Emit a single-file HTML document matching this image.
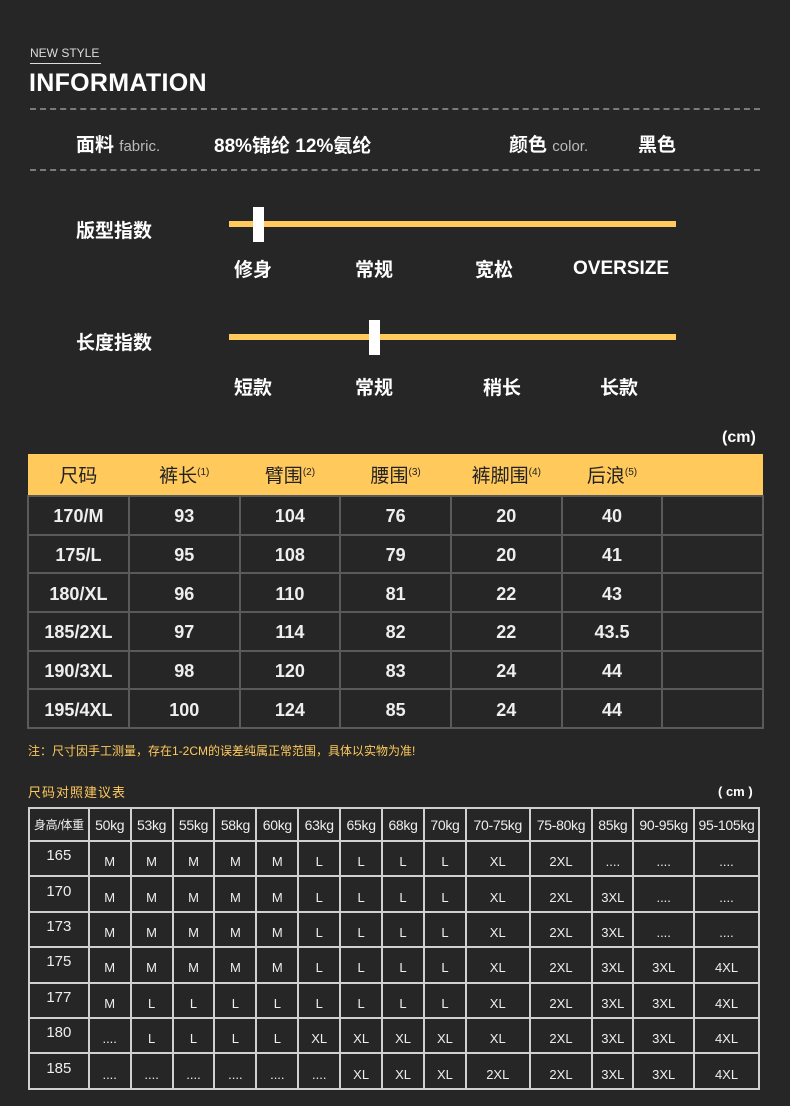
<!DOCTYPE html>
<html><head><meta charset="utf-8"><style>
*{margin:0;padding:0;box-sizing:border-box}
body{width:790px;height:1106px;background:#262626;position:relative;overflow:hidden;font-family:"Liberation Sans","Noto Sans CJK SC",sans-serif;color:#fff}
.a{position:absolute;white-space:nowrap}
.dash{position:absolute;left:30px;width:730px;height:0;border-top:2px dashed #7a7a7a}
.line{position:absolute;left:229px;width:447px;height:6px;background:#ffc95c}
.hd{position:absolute;width:11px;height:35px;background:#fff}
.lb{font-size:19px;font-weight:bold}
table{border-collapse:collapse;position:absolute}
#t1{left:27px;top:454px;width:737px}
#t1 td{border:2px solid #5a5a5a;height:38.7px;text-align:center;font-size:18px;font-weight:bold;color:#eee;padding-top:3px}
#t1 tr.h td{background:#ffc95c;color:#222;font-weight:normal;height:42px;border:none;font-size:19px;padding:0}
#t1 sup{font-size:10px;vertical-align:7px}
#t2{left:28px;top:807px;width:732px}
#t2 td{border:2px solid #d0d0d0;height:35.4px;text-align:center;font-size:13px;color:#eee;padding:6px 0 0}
#t2 tr.h td{height:33px;padding:0;font-size:14px;letter-spacing:-0.3px}
#t2 td:first-child{padding:0 0 6px;font-size:15px}
#t2 tr.h td:first-child{font-size:12px;padding:0}
</style></head><body>
<div class="a" style="left:30px;top:46px;font-size:12px;color:#ddd">NEW STYLE</div>
<div class="a" style="left:30px;top:63px;width:71px;height:1px;background:#ddd"></div>
<div class="a" style="left:29px;top:69px;font-size:25px;font-weight:bold;letter-spacing:0.3px">INFORMATION</div>
<div class="dash" style="top:108px"></div>
<div class="a" style="left:76px;top:130px;font-size:19px;font-weight:bold">面料 <span style="font-size:15px;font-weight:normal;color:#bbb">fabric.</span></div>
<div class="a" style="left:214px;top:131px;font-size:19px;font-weight:bold">88%锦纶 12%氨纶</div>
<div class="a" style="left:509px;top:130px;font-size:19px;font-weight:bold">颜色 <span style="font-size:15px;font-weight:normal;color:#bbb">color.</span></div>
<div class="a" style="left:638px;top:130px;font-size:19px;font-weight:bold">黑色</div>
<div class="dash" style="top:169px"></div>

<div class="a lb" style="left:76px;top:216px">版型指数</div>
<div class="line" style="top:221px"></div><div class="hd" style="left:253px;top:207px"></div>
<div class="a lb" style="left:234px;top:255px">修身</div>
<div class="a lb" style="left:355px;top:255px">常规</div>
<div class="a lb" style="left:475px;top:255px">宽松</div>
<div class="a lb" style="left:573px;top:258px;font-size:19px">OVERSIZE</div>

<div class="a lb" style="left:76px;top:328px">长度指数</div>
<div class="line" style="top:334px"></div><div class="hd" style="left:369px;top:320px"></div>
<div class="a lb" style="left:234px;top:373px">短款</div>
<div class="a lb" style="left:355px;top:373px">常规</div>
<div class="a lb" style="left:483px;top:373px">稍长</div>
<div class="a lb" style="left:600px;top:373px">长款</div>

<div class="a" style="left:722px;top:429px;font-size:16px;font-weight:bold">(cm)</div>
<table id="t1">
<colgroup><col style="width:101px"><col style="width:111px"><col style="width:101px"><col style="width:111px"><col style="width:111px"><col style="width:101px"><col style="width:101px"></colgroup>
<tr class="h"><td>尺码</td><td>裤长<sup>(1)</sup></td><td>臂围<sup>(2)</sup></td><td>腰围<sup>(3)</sup></td><td>裤脚围<sup>(4)</sup></td><td>后浪<sup>(5)</sup></td><td></td></tr>
<tr><td>170/M</td><td>93</td><td>104</td><td>76</td><td>20</td><td>40</td><td></td></tr>
<tr><td>175/L</td><td>95</td><td>108</td><td>79</td><td>20</td><td>41</td><td></td></tr>
<tr><td>180/XL</td><td>96</td><td>110</td><td>81</td><td>22</td><td>43</td><td></td></tr>
<tr><td>185/2XL</td><td>97</td><td>114</td><td>82</td><td>22</td><td>43.5</td><td></td></tr>
<tr><td>190/3XL</td><td>98</td><td>120</td><td>83</td><td>24</td><td>44</td><td></td></tr>
<tr><td>195/4XL</td><td>100</td><td>124</td><td>85</td><td>24</td><td>44</td><td></td></tr>
</table>
<div class="a" style="left:28px;top:742px;font-size:12px;color:#ffc95c">注：尺寸因手工测量，存在1-2CM的误差纯属正常范围，具体以实物为准!</div>
<div class="a" style="left:28px;top:782px;font-size:13px;color:#ffc95c;letter-spacing:1px">尺码对照建议表</div>
<div class="a" style="left:718px;top:784px;font-size:13px;font-weight:bold">( cm )</div>
<table id="t2">
<colgroup><col style="width:60px"><col style="width:42px"><col style="width:42px"><col style="width:42px"><col style="width:42px"><col style="width:42px"><col style="width:42px"><col style="width:42px"><col style="width:42px"><col style="width:42px"><col style="width:64px"><col style="width:63px"><col style="width:41px"><col style="width:61px"><col style="width:65px"></colgroup>
<tr class="h"><td>身高/体重</td><td>50kg</td><td>53kg</td><td>55kg</td><td>58kg</td><td>60kg</td><td>63kg</td><td>65kg</td><td>68kg</td><td>70kg</td><td>70-75kg</td><td>75-80kg</td><td>85kg</td><td>90-95kg</td><td>95-105kg</td></tr>
<tr><td>165</td><td>M</td><td>M</td><td>M</td><td>M</td><td>M</td><td>L</td><td>L</td><td>L</td><td>L</td><td>XL</td><td>2XL</td><td>....</td><td>....</td><td>....</td></tr>
<tr><td>170</td><td>M</td><td>M</td><td>M</td><td>M</td><td>M</td><td>L</td><td>L</td><td>L</td><td>L</td><td>XL</td><td>2XL</td><td>3XL</td><td>....</td><td>....</td></tr>
<tr><td>173</td><td>M</td><td>M</td><td>M</td><td>M</td><td>M</td><td>L</td><td>L</td><td>L</td><td>L</td><td>XL</td><td>2XL</td><td>3XL</td><td>....</td><td>....</td></tr>
<tr><td>175</td><td>M</td><td>M</td><td>M</td><td>M</td><td>M</td><td>L</td><td>L</td><td>L</td><td>L</td><td>XL</td><td>2XL</td><td>3XL</td><td>3XL</td><td>4XL</td></tr>
<tr><td>177</td><td>M</td><td>L</td><td>L</td><td>L</td><td>L</td><td>L</td><td>L</td><td>L</td><td>L</td><td>XL</td><td>2XL</td><td>3XL</td><td>3XL</td><td>4XL</td></tr>
<tr><td>180</td><td>....</td><td>L</td><td>L</td><td>L</td><td>L</td><td>XL</td><td>XL</td><td>XL</td><td>XL</td><td>XL</td><td>2XL</td><td>3XL</td><td>3XL</td><td>4XL</td></tr>
<tr><td>185</td><td>....</td><td>....</td><td>....</td><td>....</td><td>....</td><td>....</td><td>XL</td><td>XL</td><td>XL</td><td>2XL</td><td>2XL</td><td>3XL</td><td>3XL</td><td>4XL</td></tr>
</table>
</body></html>
